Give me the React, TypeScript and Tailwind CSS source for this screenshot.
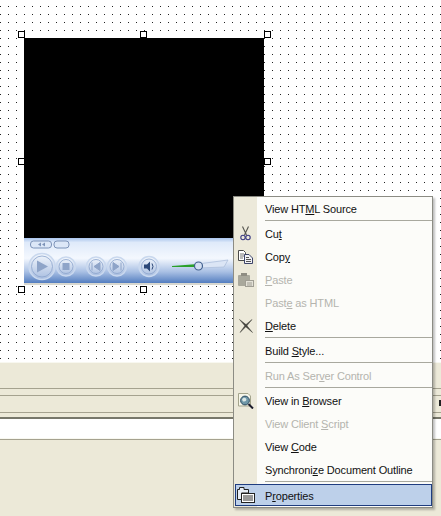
import React from 'react';

const font = { fontFamily: '"Liberation Sans", Tahoma, sans-serif' };

type Item = {
  before: string;
  key_: string;
  after: string;
  disabled?: boolean;
  active?: boolean;
  icon?: React.ReactNode;
  sep?: boolean;
};

const Scissors = () => (
  <svg width="11" height="15" viewBox="0 0 11 15" fill="none">
    <path d="M2.5 0.5 L6.5 9 M8.5 0.5 L4.5 9" stroke="#55554f" strokeWidth="1.1" />
    <circle cx="3" cy="11.5" r="2.2" stroke="#3a3a80" strokeWidth="1.1" />
    <circle cx="8" cy="11.5" r="2.2" stroke="#3a3a80" strokeWidth="1.1" />
  </svg>
);

const CopyIcon = () => (
  <svg width="15" height="14" viewBox="0 0 15 14" fill="none">
    <path d="M0.5 0.5H5.5L7.5 2.5V10.5H0.5Z" fill="#fff" stroke="#4a4a4a" />
    <path d="M2 4H6M2 6H6M2 8H5" stroke="#777" />
    <path d="M6.5 4.5H11L14.5 8V13.5H6.5Z" fill="#f2f2f6" stroke="#3d4468" />
    <path d="M8 7.5H11M8 9.5H13M8 11.5H13" stroke="#555" />
  </svg>
);

const PasteIcon = () => (
  <svg width="16" height="14" viewBox="0 0 16 14">
    <rect x="0" y="2" width="12" height="11" rx="1" fill="#a9a89c" />
    <rect x="3" y="0" width="6" height="3" fill="#8f8d83" />
    <rect x="7.5" y="7.5" width="8" height="6" fill="#e4e2d8" stroke="#a09e94" />
    <path d="M9 10H14M9 12H14" stroke="#a09e94" />
  </svg>
);

const DeleteIcon = () => (
  <svg width="14" height="14" viewBox="0 0 14 14">
    <path d="M0.5 0.5 L7 5.6 L13.5 13.5 L6.4 7.4Z M13 0.5 L7.6 7 L1 13.5 L6.2 6.2Z" fill="#45453f" stroke="#45453f" strokeWidth="0.5" />
  </svg>
);

const BrowserIcon = () => (
  <svg width="16" height="16" viewBox="0 0 16 16" fill="none">
    <path d="M0.5 .5H10L12.5 3V13H.5Z" fill="#f6f6ea" stroke="#a4a48c" />
    <circle cx="7" cy="7.5" r="4.4" fill="#6f97a8" stroke="#2c4a60" />
    <path d="M4 6.5c1-2 3-2 4-1s0 3-2 3-1-1-2-2Z" fill="#dce8e6" />
    <path d="M10.5 11 L15 15.5" stroke="#1c1c2c" strokeWidth="2" />
  </svg>
);

const PropertiesIcon = () => (
  <svg width="18" height="16" viewBox="0 0 18 16" fill="none">
    <path d="M0.5 2.5H2.5V0.5H7V2.5H11.5V6H4.5V12.5H0.5Z" fill="#e8eef6" stroke="#222" />
    <rect x="4.5" y="6.5" width="13" height="9" fill="#fff" stroke="#222" />
    <path d="M6 9H16M6 11H16M6 13H16" stroke="#333" />
  </svg>
);

const items: Item[] = [
  { before: 'View HT', key_: 'M', after: 'L Source', sep: true },
  { before: 'Cu', key_: 't', after: '', icon: <Scissors /> },
  { before: 'Cop', key_: 'y', after: '', icon: <CopyIcon /> },
  { before: '', key_: 'P', after: 'aste', disabled: true, icon: <PasteIcon /> },
  { before: 'Past', key_: 'e', after: ' as HTML', disabled: true },
  { before: '', key_: 'D', after: 'elete', icon: <DeleteIcon />, sep: true },
  { before: 'Build ', key_: 'S', after: 'tyle...', sep: true },
  { before: 'Run As Ser', key_: 'v', after: 'er Control', disabled: true, sep: true },
  { before: 'View in ', key_: 'B', after: 'rowser', icon: <BrowserIcon /> },
  { before: 'View Client ', key_: 'S', after: 'cript', disabled: true },
  { before: 'View ', key_: 'C', after: 'ode' },
  { before: 'Synchroni', key_: 'z', after: 'e Document Outline', sep: true },
  { before: 'P', key_: 'r', after: 'operties', active: true, icon: <PropertiesIcon /> },
];

const ContextMenu = () => (
  <div
    className="absolute left-[233px] top-[196px] w-[200px] border border-[#8c8c84] bg-[#fcfcf9] pb-[1px] text-[11px] tracking-[-0.15px] text-[#111] shadow-[2px_2px_2px_rgba(0,0,0,0.25)]"
    style={font}
  >
    <div className="absolute bottom-0 left-0 top-0 w-[23px] bg-[#ece9da]" />
    {items.map((it) => (
      <div key={it.before + it.key_} className="relative">
        <div
          className={
            'flex items-center ' +
            (it.active ? 'ml-[1px] mt-[1px] h-[22px] border border-[#1f3d80] bg-[#bdd0ea]' : 'ml-[2px] h-[23px]')
          }
        >
          <div className="mr-[10px] flex w-[19px] shrink-0 items-center justify-center">{it.icon}</div>
          <span className={'pt-[2px] ' + (it.disabled ? 'text-[#b4b4ae]' : '')}>
            {it.before}
            <u>{it.key_}</u>
            {it.after}
          </span>
        </div>
        {it.sep && <div className="ml-[31px] h-[2px] border-t border-[#a8a89e]" />}
      </div>
    ))}
  </div>
);

const RoundButton = ({ cx, r, children }: { cx: number; r: number; children?: React.ReactNode }) => (
  <g>
    <circle cx={cx} cy="28.5" r={r} fill="url(#btn)" stroke="#c9d8ee" strokeWidth="1.5" />
    <circle cx={cx} cy="28.5" r={r - 2.5} fill="none" stroke="#8aa3cb" strokeWidth="0.8" />
    {children}
  </g>
);

const PlayerBar = () => (
  <svg width="240" height="45" viewBox="0 0 240 45" className="block">
    <defs>
      <linearGradient id="bar" x1="0" y1="0" x2="0" y2="1">
        <stop offset="0" stopColor="#a9c4ec" />
        <stop offset="0.1" stopColor="#dfeafa" />
        <stop offset="0.45" stopColor="#f4f8fe" />
        <stop offset="0.75" stopColor="#a9c0e4" />
        <stop offset="1" stopColor="#547ec0" />
      </linearGradient>
      <linearGradient id="btn" x1="0" y1="0" x2="0" y2="1">
        <stop offset="0" stopColor="#f4f8fd" />
        <stop offset="1" stopColor="#a8bde0" />
      </linearGradient>
    </defs>
    <rect width="240" height="45" fill="url(#bar)" />
    <rect x="6.5" y="3" width="21" height="7" rx="3" fill="#dce7f7" stroke="#7d93b8" />
    <rect x="30" y="3" width="15" height="7" rx="3" fill="#dce7f7" stroke="#7d93b8" />
    <path d="M14 6.5 l3-2v4Z M18 6.5 l3-2v4Z" fill="#7d93b8" />
    <RoundButton cx={42} r={9.5}>
      <rect x="38.5" y="25" width="7" height="7" fill="#8ea4c8" />
    </RoundButton>
    <RoundButton cx={18} r={13}>
      <path d="M13 22.5 L24 28.5 L13 34.5Z" fill="#8ea4c8" />
    </RoundButton>
    <RoundButton cx={72} r={9.5}>
      <path d="M68 24.5v8M76 24.5l-6 4 6 4Z" fill="#8ea4c8" stroke="#8ea4c8" />
    </RoundButton>
    <RoundButton cx={93} r={9.5}>
      <path d="M97 24.5v8M89 24.5l6 4-6 4Z" fill="#8ea4c8" stroke="#8ea4c8" />
    </RoundButton>
    <RoundButton cx={125} r={10}>
      <path d="M120 26.5h3l3-3v10l-3-3h-3Z" fill="#2c4878" />
      <path d="M128 25.5q2 3 0 6" stroke="#2c4878" fill="none" />
    </RoundButton>
    <path d="M148 28 L174 26 V29 L148 29Z" fill="#2aa02a" />
    <path d="M174 26 L204 22 L200 29 L174 30Z" fill="#dbe5f5" stroke="#a8bad8" strokeWidth="0.7" />
    <circle cx="174.5" cy="28" r="4" fill="#d3dff2" stroke="#41608f" strokeWidth="1.2" />
  </svg>
);

const Handle = ({ className }: { className: string }) => (
  <div className={'absolute h-[7px] w-[7px] border border-black bg-white ' + className} />
);

export default function App() {
  return (
    <div className="relative h-[516px] w-[441px] overflow-hidden bg-[#ece9d8]">
      <div className="h-[362px] bg-[#222] bg-[linear-gradient(to_right,transparent_1px,#fff_1px),linear-gradient(to_bottom,transparent_1px,#fff_1px)] bg-[size:8px_8px] bg-[position:0px_6px] pl-[24px] pt-[38px]">
        <div className="w-[240px] border-b-2 border-[#d8d8d0]">
          <div className="h-[200px] bg-black" />
          <PlayerBar />
        </div>
      </div>
      <div className="h-[1px] bg-[#f8f8f0]" />
      <div className="mt-[25px] h-[1px] bg-[#a5a28f]" />
      <div className="mt-[6px] h-[1px] bg-[#a5a28f]" />
      <div className="mt-[16px] h-[1px] bg-[#a5a28f]" />
      <div className="mt-[4px] h-[2px] bg-[#77776a]" />
      <div className="h-[19px] bg-white" />
      <div className="h-[1px] bg-[#f8f8f0]" />
      <div className="h-[1px] bg-[#a5a28f]" />

      <Handle className="left-[18px] top-[31px]" />
      <Handle className="left-[140px] top-[31px]" />
      <Handle className="left-[264px] top-[31px]" />
      <Handle className="left-[18px] top-[158px]" />
      <Handle className="left-[264px] top-[158px]" />
      <Handle className="left-[18px] top-[286px]" />
      <Handle className="left-[140px] top-[286px]" />

      <div className="absolute left-[439px] top-[400px] h-[6px] w-[2px] bg-[#222]" />

      <ContextMenu />
    </div>
  );
}
